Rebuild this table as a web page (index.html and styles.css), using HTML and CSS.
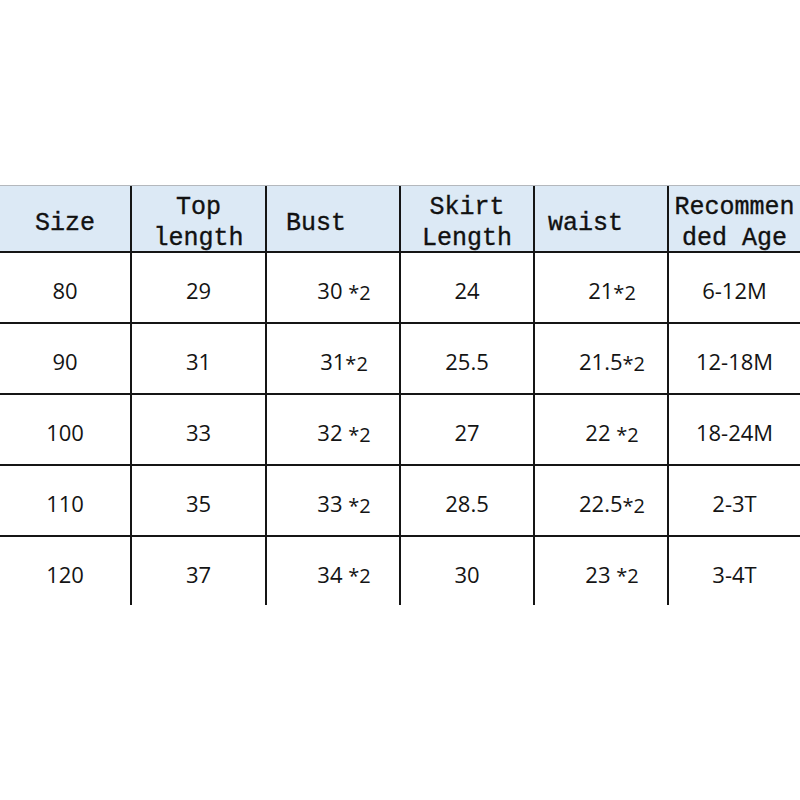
FILE: index.html
```html
<!DOCTYPE html>
<html>
<head>
<meta charset="utf-8">
<link rel="stylesheet" href="styles.css">
</head>
<body>
<div class="page">
  <div class="chart">
    <div class="row head">
      <div class="cell c1">Size</div>
      <div class="cell c2">Top<br>length</div>
      <div class="cell c3 left">Bust</div>
      <div class="cell c4">Skirt<br>Length</div>
      <div class="cell c5 left">waist</div>
      <div class="cell c6">Recommen<br>ded Age</div>
    </div>
    <div class="row">
      <div class="cell c1">80</div>
      <div class="cell c2">29</div>
      <div class="cell c3 off">30 <span class="m">*2</span></div>
      <div class="cell c4">24</div>
      <div class="cell c5 off">21<span class="m">*2</span></div>
      <div class="cell c6">6-12M</div>
    </div>
    <div class="row">
      <div class="cell c1">90</div>
      <div class="cell c2">31</div>
      <div class="cell c3 off">31<span class="m">*2</span></div>
      <div class="cell c4">25.5</div>
      <div class="cell c5 off">21.5<span class="m">*2</span></div>
      <div class="cell c6">12-18M</div>
    </div>
    <div class="row">
      <div class="cell c1">100</div>
      <div class="cell c2">33</div>
      <div class="cell c3 off">32 <span class="m">*2</span></div>
      <div class="cell c4">27</div>
      <div class="cell c5 off">22 <span class="m">*2</span></div>
      <div class="cell c6">18-24M</div>
    </div>
    <div class="row">
      <div class="cell c1">110</div>
      <div class="cell c2">35</div>
      <div class="cell c3 off">33 <span class="m">*2</span></div>
      <div class="cell c4">28.5</div>
      <div class="cell c5 off">22.5<span class="m">*2</span></div>
      <div class="cell c6">2-3T</div>
    </div>
    <div class="row last">
      <div class="cell c1">120</div>
      <div class="cell c2">37</div>
      <div class="cell c3 off">34 <span class="m">*2</span></div>
      <div class="cell c4">30</div>
      <div class="cell c5 off">23 <span class="m">*2</span></div>
      <div class="cell c6">3-4T</div>
    </div>
  </div>
</div>
</body>
</html>
```

FILE: styles.css
```css
html, body {
  margin: 0;
  padding: 0;
  background: #ffffff;
}

.page {
  width: 800px;
  height: 800px;
  padding-top: 185px;
  box-sizing: border-box;
}

.chart {
  width: 800px;
  display: flex;
  flex-direction: column;
}

.row {
  display: grid;
  grid-template-columns: 130px 135px 134px 134px 134px 133px;
  height: 71px;
  border-bottom: 2px solid #151515;
  box-sizing: border-box;
}

.row.last {
  height: 68px;
  border-bottom: none;
}

.row.head {
  height: 68px;
  background: #dce9f5;
  border-top: 1px solid #b4b8bd;
}

.cell {
  display: flex;
  align-items: center;
  justify-content: center;
  text-align: center;
  font-family: "Open Sans", "Liberation Sans", sans-serif;
  font-size: 22px;
  color: #141414;
  padding-top: 5px;
  box-sizing: border-box;
  white-space: pre;
}

.cell.c2, .cell.c3, .cell.c4, .cell.c5, .cell.c6 {
  border-left: 2px solid #151515;
}

.head .cell {
  font-family: "Liberation Mono", "DejaVu Sans Mono", monospace;
  font-size: 25px;
  line-height: 31px;
  color: #111111;
  -webkit-text-stroke: 0.35px #111111;
  padding-top: 6px;
  white-space: normal;
}

.head .cell.left {
  justify-content: flex-start;
}

.head .cell.c3 {
  padding-left: 19px;
}

.head .cell.c5 {
  padding-left: 13px;
}

.cell.off {
  padding-left: 22px;
}

.m {
  font-size: 20px;
  position: relative;
  top: 2px;
}
```
